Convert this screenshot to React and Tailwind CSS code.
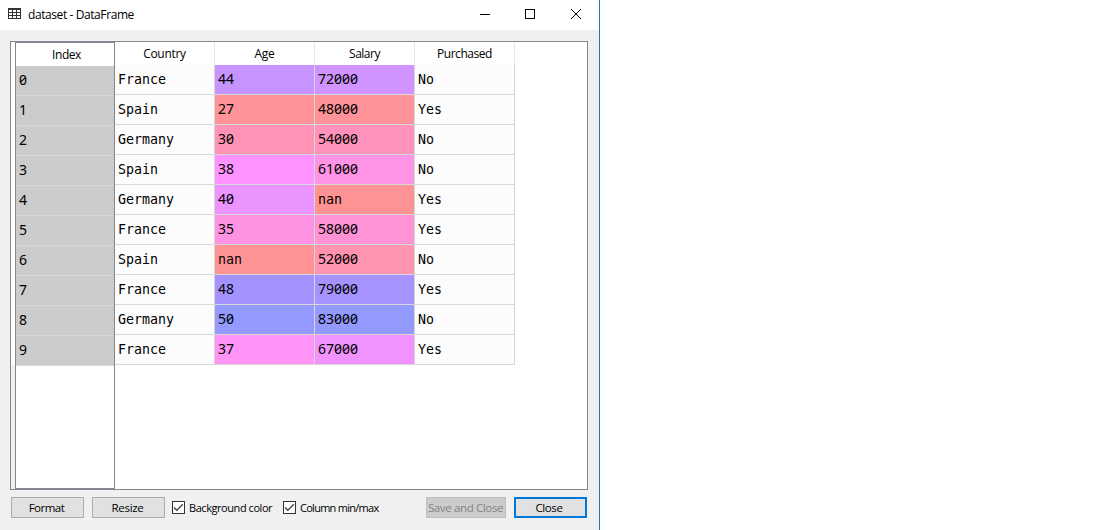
import React from "react";

const rows = [
  ["France", "44", "72000", "No", "bg-[#c693ff]", "bg-[#d193ff]"],
  ["Spain", "27", "48000", "Yes", "bg-[#ff9399]", "bg-[#ff9399]"],
  ["Germany", "30", "54000", "No", "bg-[#ff93b5]", "bg-[#ff93bb]"],
  ["Spain", "38", "61000", "No", "bg-[#ff93ff]", "bg-[#ff93e6]"],
  ["Germany", "40", "nan", "Yes", "bg-[#eb93ff]", "bg-[#ff9393]"],
  ["France", "35", "58000", "Yes", "bg-[#ff93e3]", "bg-[#ff93d5]"],
  ["Spain", "nan", "52000", "No", "bg-[#ff9393]", "bg-[#ff93b0]"],
  ["France", "48", "79000", "Yes", "bg-[#a493ff]", "bg-[#a793ff]"],
  ["Germany", "50", "83000", "No", "bg-[#9399ff]", "bg-[#9399ff]"],
  ["France", "37", "67000", "Yes", "bg-[#ff93f6]", "bg-[#f093ff]"],
];

const headers = [
  ["Country", "tracking-[-0.28px]"],
  ["Age", "tracking-[-0.3px]"],
  ["Salary", "tracking-[-0.5px]"],
  ["Purchased", "tracking-[-0.45px]"],
];

function Value({ children }) {
  return /^\d/.test(children) ? (
    <span className="-mt-[2px] font-['Noto_Sans',sans-serif] text-[14px] [font-feature-settings:'zero']">{children}</span>
  ) : (
    <span className="font-['DejaVu_Sans_Mono',monospace] text-[13.28px]">{children}</span>
  );
}

function Cell({ children, color = "bg-[#fcfcfc]" }) {
  return (
    <div className={`flex h-[30px] w-[100px] items-center border-r border-b border-[#d8d8d8] pl-[3px] leading-[20px] ${color}`}>
      <Value>{children}</Value>
    </div>
  );
}

function Button({ children, className }) {
  return (
    <button className={`flex h-[21px] shrink-0 items-center justify-center whitespace-nowrap pt-px text-[11.5px] ${className}`}>{children}</button>
  );
}

function Check({ children, className }) {
  return (
    <label className={`flex shrink-0 items-center whitespace-nowrap text-[11px] ${className}`}>
      <svg width="13" height="13" viewBox="0 0 13 13" className="mr-1 shrink-0">
        <rect x="0.5" y="0.5" width="12" height="12" fill="#fff" stroke="#333" />
        <path d="M2 6.5 L4.8 9.3 L10.8 3.3" fill="none" stroke="#444" strokeWidth="1.3" />
      </svg>
      <span className="pt-px">{children}</span>
    </label>
  );
}

export default function App() {
  return (
    <div className="h-[530px] w-[1110px] overflow-hidden bg-white font-['Open_Sans',sans-serif] text-[12px] text-black">
      <div className="flex h-full w-[600px] flex-col border-r border-[#1879c0] bg-[#f0f0f0]">
        <div className="flex h-[30px] shrink-0 items-center bg-white pl-2">
          <svg width="13" height="11" viewBox="0 0 13 11" className="mr-[7px] -mt-[3px]" shapeRendering="crispEdges">
            <path d="M0 0H13V2H0Z M0 4H13V5H0Z M0 7H13V8H0Z M0 10H13V11H0Z M0 0H1V11H0Z M4 0H5V11H4Z M8 0H9V11H8Z M12 0H13V11H12Z" fill="#333" />
          </svg>
          <span className="leading-[16px] tracking-[-0.41px]">dataset - DataFrame</span>
          <svg width="102" height="12" viewBox="0 0 102 12" className="mr-[17px] ml-auto -mt-[2px]" fill="none" stroke="#000">
            <path d="M0 6.5H10" />
            <rect x="45.5" y="1.5" width="9" height="9" />
            <path d="M91 1L101 11M101 1L91 11" />
          </svg>
        </div>

        <div className="mt-[11px] ml-[10px] flex h-[449px] w-[578px] shrink-0 border border-[#828790] bg-white">
          <div className="flex w-1 shrink-0 flex-col bg-[#f0f0f0]">
            <div className="h-[323px] bg-white" />
          </div>
          <div className="h-[447px] w-[100px] shrink-0 border border-[#828790]">
            <div className="flex h-[23px] items-center justify-center pt-px pl-[3px] tracking-[-0.45px]">Index</div>
            {rows.map((_, i) => (
              <div key={i} className="flex h-[30px] items-center border-b border-[#d8d8d8] bg-[#cccccc] pl-[3px] leading-[20px]">
                <Value>{String(i)}</Value>
              </div>
            ))}
          </div>
          <div className="flex w-[400px] flex-col">
            <div className="flex h-[23px] shrink-0">
              {headers.map(([name, tracking]) => (
                <div key={name} className={`flex w-[100px] items-center justify-center border-r border-[#e5e5e5] pt-px ${tracking}`}>{name}</div>
              ))}
            </div>
            {rows.map(([country, age, salary, purchased, ageColor, salaryColor], i) => (
              <div key={i} className="flex">
                <Cell>{country}</Cell>
                <Cell color={ageColor}>{age}</Cell>
                <Cell color={salaryColor}>{salary}</Cell>
                <Cell>{purchased}</Cell>
              </div>
            ))}
          </div>
        </div>

        <div className="mt-[7px] ml-[11px] flex h-[21px] items-center">
          <Button className="w-[73px] border border-[#adadad] bg-[#e1e1e1] pr-[2px] tracking-[-0.5px]">Format</Button>
          <Button className="ml-2 w-[73px] border border-[#adadad] bg-[#e1e1e1] pr-[2px] tracking-[-0.3px]">Resize</Button>
          <Check className="ml-[7px] w-[111px] tracking-[-0.44px]">Background color</Check>
          <Check className="w-[143px] tracking-[-0.73px]">Column min/max</Check>
          <Button className="w-[80px] border border-[#bfbfbf] bg-[#cccccc] pr-px tracking-[-0.37px] text-[#838383]">Save and Close</Button>
          <Button className="ml-2 w-[73px] border-2 border-[#0078d7] bg-[#e1e1e1] pr-[3px] tracking-[-0.4px]">Close</Button>
        </div>
      </div>
    </div>
  );
}
